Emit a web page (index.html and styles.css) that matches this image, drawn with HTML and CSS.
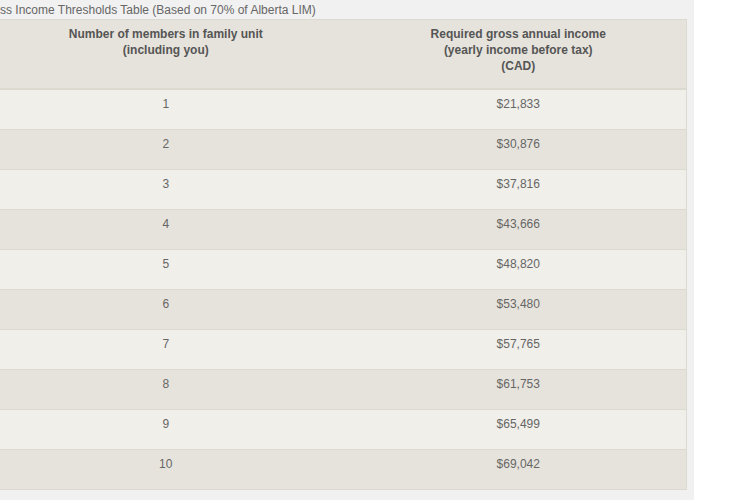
FILE: index.html
```html
<!DOCTYPE html>
<html>
<head>
<meta charset="utf-8">
<link rel="stylesheet" href="styles.css">
</head>
<body>
<div class="panel">
  <div class="inner">
    <table class="thresholds">
      <caption>Gross Income Thresholds Table (Based on 70% of Alberta LIM)</caption>
      <colgroup><col class="c1"><col class="c2"></colgroup>
      <thead>
        <tr>
          <th>Number of members in family unit<br>(including you)</th>
          <th>Required gross annual income<br>(yearly income before tax)<br>(CAD)</th>
        </tr>
      </thead>
      <tbody>
        <tr><td>1</td><td>$21,833</td></tr>
        <tr><td>2</td><td>$30,876</td></tr>
        <tr><td>3</td><td>$37,816</td></tr>
        <tr><td>4</td><td>$43,666</td></tr>
        <tr><td>5</td><td>$48,820</td></tr>
        <tr><td>6</td><td>$53,480</td></tr>
        <tr><td>7</td><td>$57,765</td></tr>
        <tr><td>8</td><td>$61,753</td></tr>
        <tr><td>9</td><td>$65,499</td></tr>
        <tr><td>10</td><td>$69,042</td></tr>
      </tbody>
    </table>
  </div>
</div>
</body>
</html>
```

FILE: styles.css
```css
html, body {
  margin: 0;
  padding: 0;
  background: #ffffff;
}
body {
  font-family: "Liberation Sans", Arial, sans-serif;
  width: 750px;
  height: 500px;
  overflow: hidden;
}
.panel {
  width: 694px;
  height: 500px;
  background: #f1f1f1;
  overflow: hidden;
}
.inner {
  margin-left: -20px;
}
.thresholds {
  width: 706px;
  border-collapse: collapse;
  table-layout: fixed;
  border: 1px solid #dcd9d0;
}
.thresholds caption {
  text-align: left;
  font-size: 12px;
  line-height: 15px;
  color: #666666;
  padding: 3px 0 1px 0;
  white-space: nowrap;
}
.c1 { width: 370px; }
.c2 { width: 336px; }
.thresholds th {
  background: #e6e3dc;
  color: #555555;
  font-size: 12px;
  font-weight: bold;
  line-height: 16px;
  text-align: center;
  vertical-align: top;
  padding: 6px 10px 14px;
  height: 48px;
  border-bottom: 2px solid #dcd9d0;
}
.thresholds td {
  font-size: 12px;
  line-height: 16px;
  color: #666666;
  text-align: center;
  vertical-align: top;
  padding: 6px 10px 17px;
  border-top: 1px solid #dcd9d0;
}
.thresholds tbody tr:nth-child(odd) td {
  background: #f0efea;
}
.thresholds tbody tr:nth-child(even) td {
  background: #e6e3dc;
}
```
